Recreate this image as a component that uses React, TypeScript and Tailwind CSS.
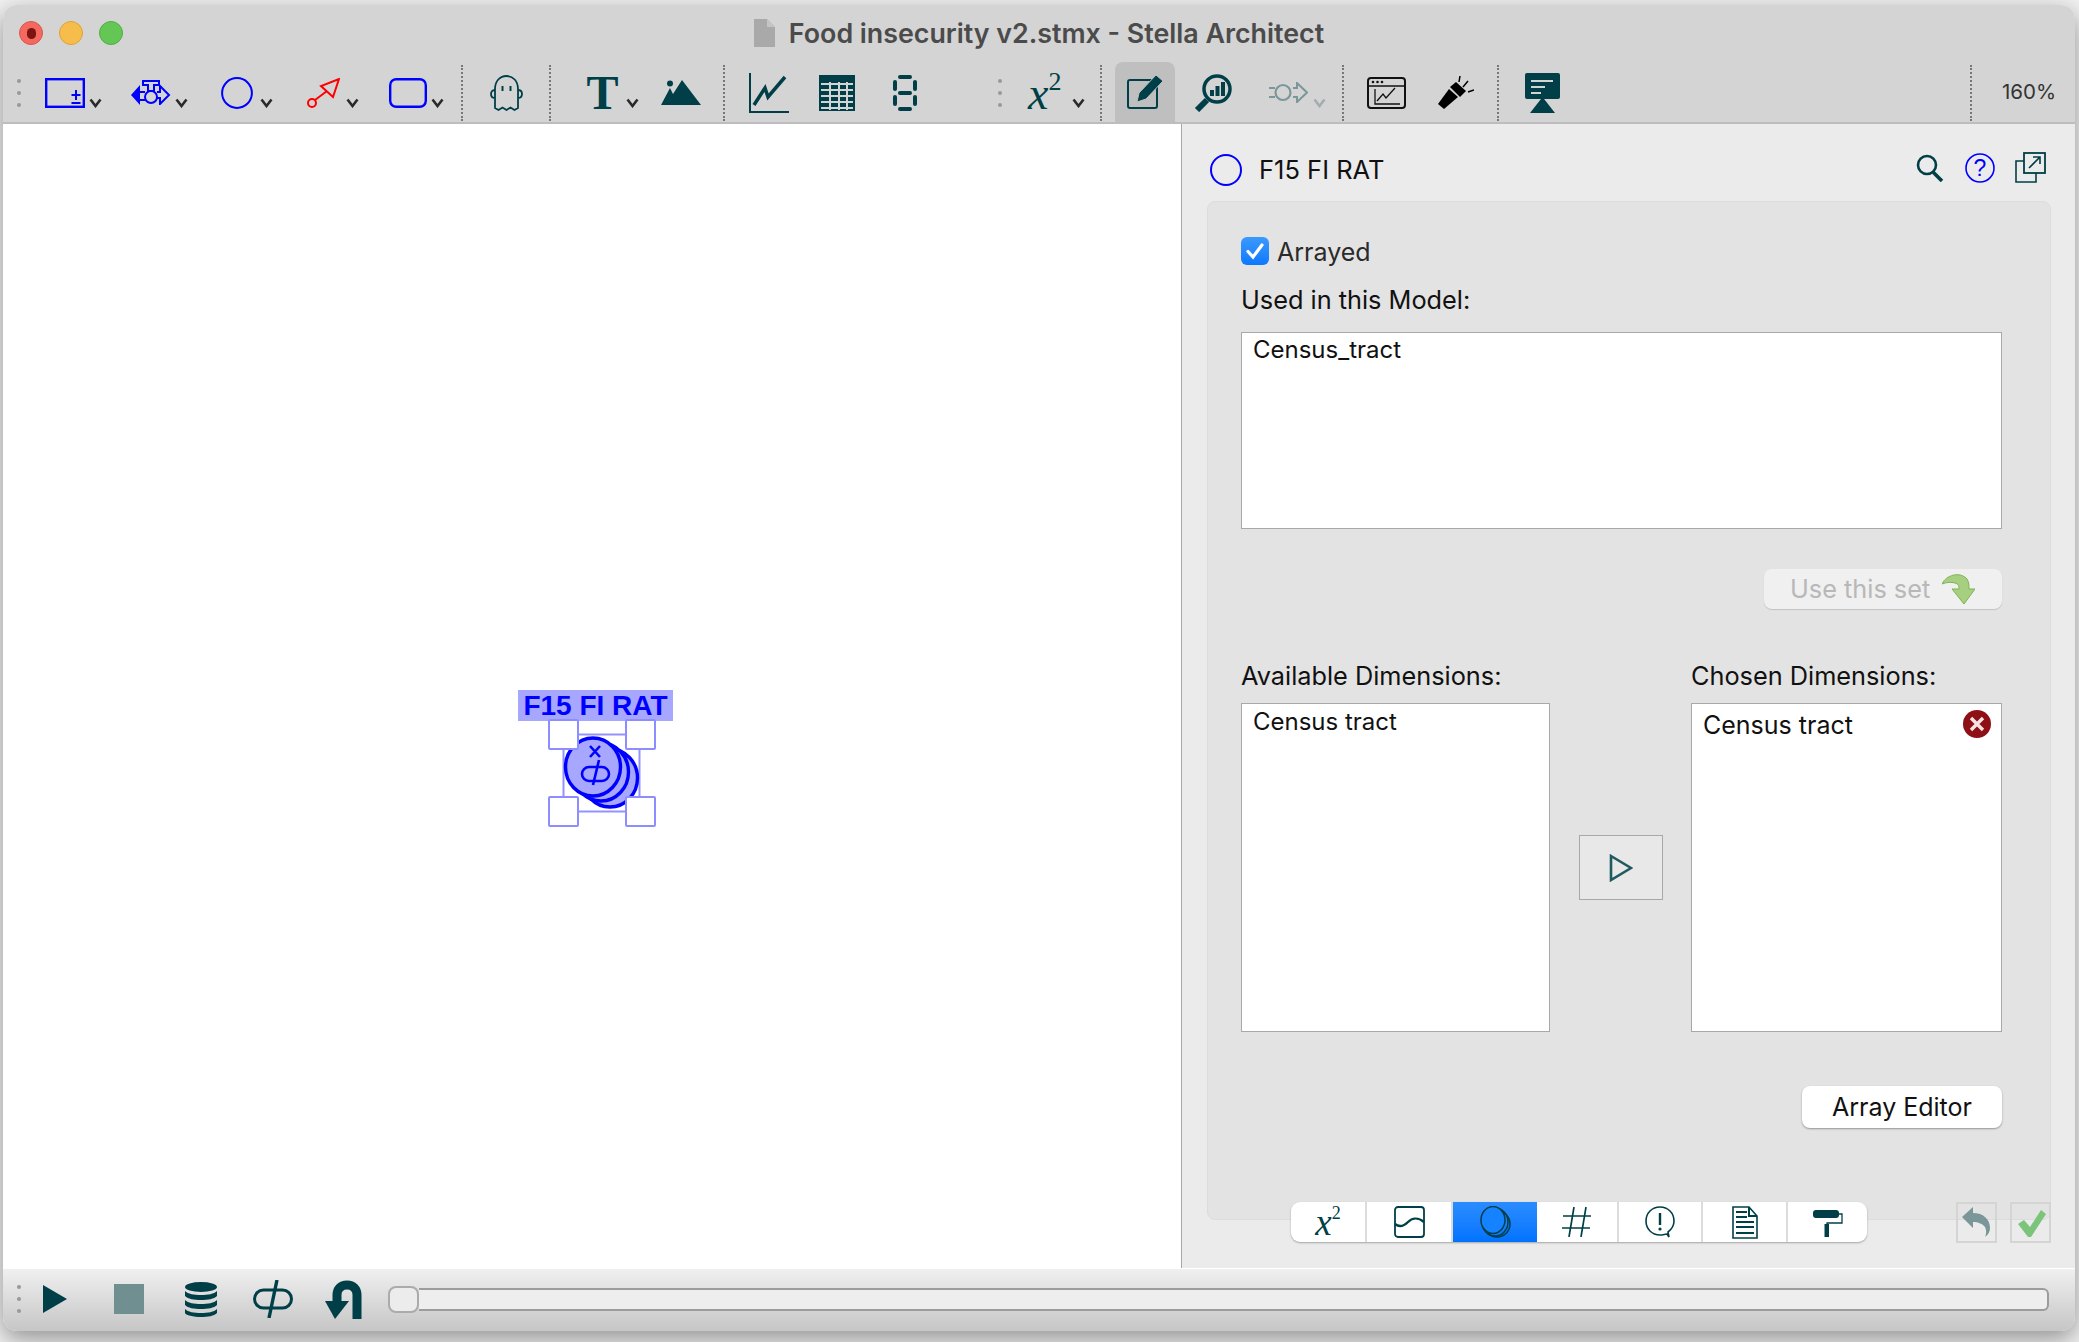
const teal = "#003f47";

function Chevron({ light, ml }: { light?: boolean; ml: string }) {
	return (
		<svg width="13" height="10" viewBox="0 0 13 10" className={`mt-[20px] shrink-0 ${ml}`}>
			<path d="M1.500 1.500 6.500 8l5-6.500" fill="none" stroke={light ? "#a3adae" : "#2a2a2a"} strokeWidth="2.600" />
		</svg>
	);
}

function Sep({ ml }: { ml: string }) {
	return <div className={`h-[56px] w-0 border-l-2 border-dotted border-[#777] shrink-0 ${ml}`} />;
}

function Grip({ className }: { className: string }) {
	return (
		<div className={`flex flex-col gap-[8px] shrink-0 ${className}`}>
			<div className="w-[4px] h-[4px] rounded-full bg-[#999]" />
			<div className="w-[4px] h-[4px] rounded-full bg-[#999]" />
			<div className="w-[4px] h-[4px] rounded-full bg-[#999]" />
		</div>
	);
}

function Toolbar() {
	return (
		<div className="flex items-center h-[61px] pt-[2px]">
			<Grip className="ml-[14px]" />
			{/* stock */}
			<svg width="40" height="30" viewBox="0 0 40 30" className="ml-[24px] shrink-0">
				<rect x="1.200" y="1.200" width="37.600" height="27.600" fill="none" stroke="#0000ff" strokeWidth="2.400" />
				<path d="M31 12v10M26.500 17h9M26.500 25h9" stroke="#0000ff" strokeWidth="2" />
			</svg>
			<Chevron ml="ml-[4px]" />
			{/* flow */}
			<svg width="40" height="25" viewBox="0 0 40 25" className="ml-[29px] shrink-0">
				<path d="M0 15 9 5v20z" fill="#0000ff" />
				<path d="M12 1h16v4h-5v6h-6V5h-5z" fill="none" stroke="#0000ff" strokeWidth="2" />
				<circle cx="20" cy="17" r="6" fill="none" stroke="#0000ff" strokeWidth="2" />
				<path d="M9 12h5M9 20h5M26 12h3V6l9 9-9 9v-6h-3" fill="none" stroke="#0000ff" strokeWidth="2" />
			</svg>
			<Chevron ml="ml-[4px]" />
			{/* converter */}
			<svg width="32" height="32" viewBox="0 0 32 32" className="ml-[33px] shrink-0">
				<circle cx="16" cy="16" r="14.900" fill="none" stroke="#0000ff" strokeWidth="2" />
			</svg>
			<Chevron ml="ml-[7px]" />
			{/* connector */}
			<svg width="33" height="30" viewBox="0 0 33 30" className="ml-[34px] shrink-0">
				<circle cx="5" cy="25" r="4" fill="none" stroke="#ff0000" strokeWidth="2" />
				<path d="M8 22 20 13M32 1 26 19 14 8z" fill="none" stroke="#ff0000" strokeWidth="2" />
			</svg>
			<Chevron ml="ml-[6px]" />
			{/* module */}
			<svg width="38" height="30" viewBox="0 0 38 30" className="ml-[30px] shrink-0">
				<rect x="1.200" y="1.200" width="35.600" height="27.600" rx="6" fill="none" stroke="#0000ff" strokeWidth="2.400" />
			</svg>
			<Chevron ml="ml-[4px]" />
			<Sep ml="ml-[17px]" />
			{/* ghost */}
			<svg width="33" height="36" viewBox="0 0 33 36" className="ml-[27px] shrink-0">
				<path
					d="M5 22V14C5 6 10 1 16.500 1S28 6 28 14v8M5 15c-3 0-4 2-4 4s1 4 4 4v10l3.500 2 4-2.500 4 2.500 4-2.500 4 2.500 3.500-2V23c3 0 4-2 4-4s-1-4-4-4"
					fill="none"
					stroke={teal}
					strokeWidth="1.800"
				/>
				<path d="M12.500 11v5M20.500 11v5" stroke={teal} strokeWidth="2" />
			</svg>
			<Sep ml="ml-[26px]" />
			{/* text */}
			<span className="ml-[35px] w-[33px] h-[48px] shrink-0 flex items-center justify-center font-['Liberation_Serif',serif] font-bold text-[48px] leading-none text-[#003f47]">
				T
			</span>
			<Chevron ml="ml-[7px]" />
			{/* image */}
			<svg width="40" height="25" viewBox="0 0 40 25" className="ml-[22px] shrink-0">
				<circle cx="9" cy="3.500" r="3" fill={teal} />
				<path d="M0 25 9 8l3 6L21 0l19 25z" fill={teal} />
			</svg>
			<Sep ml="ml-[22px]" />
			{/* graph */}
			<svg width="40" height="40" viewBox="0 0 40 40" className="ml-[24px] shrink-0">
				<path d="M1 0v39h39" fill="none" stroke={teal} strokeWidth="2" />
				<path d="M5 32 16 15l3 9L36 4" fill="none" stroke={teal} strokeWidth="3.500" />
			</svg>
			{/* table */}
			<svg width="36" height="36" viewBox="0 0 36 36" className="ml-[30px] shrink-0">
				<rect width="36" height="36" fill={teal} />
				<path d="M2 9h32M2 15h32M2 21h32M2 27h32M2 33h32" stroke="#d4d4d4" strokeWidth="2.200" />
				<path d="M11 7v28M20 7v28M28 7v28" stroke="#d4d4d4" strokeWidth="2" />
			</svg>
			{/* numeric display */}
			<svg width="24" height="36" viewBox="0 0 24 36" className="ml-[38px] shrink-0">
				<g fill={teal}>
					<rect x="5" y="0" width="14" height="4" rx="2" />
					<rect x="5" y="16" width="14" height="4" rx="2" />
					<rect x="5" y="32" width="14" height="4" rx="2" />
					<rect x="0" y="5" width="4" height="11" rx="2" />
					<rect x="20" y="5" width="4" height="11" rx="2" />
					<rect x="0" y="20" width="4" height="11" rx="2" />
					<rect x="20" y="20" width="4" height="11" rx="2" />
				</g>
			</svg>
			<Grip className="ml-[81px]" />
			{/* equation */}
			<span className="ml-[26px] w-[41px] h-[50px] shrink-0 flex font-['Liberation_Serif',serif] italic text-[46px] leading-[52px] text-[#003f47]">
				x<span className="not-italic text-[26px] leading-[28px]">2</span>
			</span>
			<Chevron ml="ml-[3px]" />
			<Sep ml="ml-[15px]" />
			{/* model mode, selected */}
			<div className="ml-[13px] w-[60px] h-[60px] self-end rounded-t-[8px] bg-[#bfbfbf] flex items-center justify-center shrink-0">
				<svg width="37" height="34" viewBox="0 0 37 34">
					<rect x="1" y="5" width="29" height="28" rx="2" fill="none" stroke={teal} strokeWidth="2" />
					<path d="M10 27 12 18 29 0l7 6-17 18z" fill={teal} stroke="#bfbfbf" strokeWidth="1" />
				</svg>
			</div>
			{/* analyze */}
			<svg width="38" height="38" viewBox="0 0 38 38" className="ml-[19px] shrink-0">
				<circle cx="23" cy="15" r="13" fill="none" stroke={teal} strokeWidth="3.500" />
				<path d="M13 26 3 36" stroke={teal} strokeWidth="6" />
				<path d="M16 16h4v6h-4zM21.500 12h4v10h-4zM27 8h4v14h-4z" fill={teal} />
			</svg>
			{/* disabled module link */}
			<svg width="39" height="21" viewBox="0 0 39 21" className="ml-[37px] shrink-0">
				<path d="M0 6h6M0 15h6M24 6h4V1l10 9.500L28 20v-5h-4" fill="none" stroke="#7c979a" strokeWidth="2" />
				<circle cx="14" cy="10.500" r="7.500" fill="none" stroke="#7c979a" strokeWidth="2.200" />
			</svg>
			<Chevron light ml="ml-[5px]" />
			<Sep ml="ml-[16px]" />
			{/* window with graph */}
			<svg width="39" height="32" viewBox="0 0 39 32" className="ml-[23px] shrink-0">
				<rect x="1" y="1" width="37" height="30" rx="3" fill="none" stroke="#111" strokeWidth="2" />
				<path d="M1 9h37" stroke="#111" strokeWidth="1.500" />
				<circle cx="6" cy="5" r="1.300" fill="#111" />
				<circle cx="10.500" cy="5" r="1.300" fill="#111" />
				<circle cx="15" cy="5" r="1.300" fill="#111" />
				<path d="M8 12v15h25M10 24l6-7 3 4 9-10" fill="none" stroke="#111" strokeWidth="1.300" />
			</svg>
			{/* flashlight */}
			<svg width="36" height="33" viewBox="0 0 36 33" className="ml-[32px] shrink-0">
				<path d="M0 28 11 13l9 8L6 33z" fill="#000" />
				<path d="M12 11 18 6l10 9-6 6z" fill="#000" />
				<path d="M22 0l-1 6M30 5l-5 6M36 14l-6 2" stroke="#000" strokeWidth="1.500" />
			</svg>
			<Sep ml="ml-[23px]" />
			{/* presentation */}
			<svg width="35" height="40" viewBox="0 0 35 40" className="ml-[26px] shrink-0">
				<rect width="35" height="26" rx="2" fill={teal} />
				<path d="M6 8h22M6 14h14M6 20h10" stroke="#d4d4d4" strokeWidth="2" />
				<path d="M17.500 24 30 40H5z" fill={teal} />
			</svg>
			<Sep ml="ml-[410px]" />
			<span className="ml-[30px] text-[20.500px] text-[#333] leading-none">160%</span>
		</div>
	);
}

function Canvas() {
	return (
		<div className="relative w-[1178px] bg-white shrink-0">
			<div className="absolute left-[515px] top-[566px] w-[155px] h-[31px] bg-[#a7a7ff] flex items-center justify-center font-['Liberation_Sans',sans-serif] font-bold text-[28px] text-[#0000ff] leading-none">
				F15 FI RAT
			</div>
			<svg width="115" height="115" viewBox="545 715 115 115" className="absolute left-[542px] top-[591px]">
				<rect x="563.500" y="734.500" width="76" height="77" fill="none" stroke="#9393ff" strokeWidth="2" />
				{[
					[610, 778],
					[601, 772],
					[593, 767],
				].map(([cx, cy]) => (
					<ellipse key={cx} cx={cx} cy={cy} rx="27.500" ry="29" fill="#a7a7ff" stroke="#0000ff" strokeWidth="3.400" />
				))}
				<path d="M590 746l10 11M600 746l-10 11M599 760l-6 25" stroke="#0000ff" strokeWidth="2.600" />
				<rect x="582" y="767" width="27" height="14" rx="7" fill="none" stroke="#0000ff" strokeWidth="2.600" />
				{[
					[549, 720],
					[626, 720],
					[549, 797],
					[626, 797],
				].map(([x, y]) => (
					<rect key={`${x}-${y}`} x={x} y={y} width="29" height="29" rx="1" fill="#fff" stroke="#8d8dff" strokeWidth="2" />
				))}
			</svg>
		</div>
	);
}

function ListBox({ className, children }: { className: string; children?: React.ReactNode }) {
	return (
		<div className={`bg-white border border-[#a8a8a8] pl-[11px] text-[24px] leading-[34px] text-[#111] ${className}`}>
			{children}
		</div>
	);
}

function Tab({ active, w, children }: { active?: boolean; w: string; children: React.ReactNode }) {
	return (
		<div className={`flex items-center justify-center h-full shrink-0 ${w} ${active ? "bg-gradient-to-b from-[#2a8cff] to-[#0073ff]" : "border-r-2 border-[#dcdcdc]"}`}>
			{children}
		</div>
	);
}

function Inspector() {
	return (
		<div className="flex-1 min-w-0 bg-[#ebebeb] border-l border-[#a8a8a8] flex flex-col">
			<div className="flex items-center h-[77px] pt-[14px] shrink-0">
				<svg width="32" height="32" viewBox="0 0 32 32" className="ml-[28px] shrink-0">
					<circle cx="16" cy="16" r="15" fill="none" stroke="#0000ff" strokeWidth="2" />
				</svg>
				<span className="ml-[17px] text-[25.500px] leading-none text-[#111]">F15 FI RAT</span>
				<div className="ml-auto flex items-center mr-[29px] -mt-[4px]">
					<svg width="28" height="28" viewBox="0 0 28 28" className="shrink-0">
						<circle cx="11" cy="11" r="9" fill="none" stroke={teal} strokeWidth="2.600" />
						<path d="M17 18l9 9" stroke={teal} strokeWidth="3.600" />
					</svg>
					<svg width="30" height="30" viewBox="0 0 30 30" className="ml-[21px] shrink-0">
						<circle cx="15" cy="15" r="14" fill="none" stroke="#0000ff" strokeWidth="1.600" />
						<text x="15" y="23" textAnchor="middle" fontSize="23" fill="#0000ff" fontFamily="Liberation Sans">?</text>
					</svg>
					<svg width="31" height="31" viewBox="0 0 31 31" className="ml-[20px] shrink-0">
						<path d="M9 9H1v21h20v-9" fill="none" stroke={teal} strokeWidth="1.600" />
						<rect x="9" y="1" width="21" height="20" fill="#ebebeb" stroke={teal} strokeWidth="1.800" />
						<path d="M14 16 25 5M18 5h7v7" fill="none" stroke={teal} strokeWidth="1.600" />
					</svg>
				</div>
			</div>

			<div className="ml-[25px] w-[844px] h-[1019px] shrink-0 bg-[#e3e3e3] border border-[#dcdcdc] rounded-[8px] pl-[33px] pt-[35px] flex flex-col">
				<div className="flex items-center h-[28px] w-[761px]">
					<div className="w-[28px] h-[28px] rounded-[6px] bg-gradient-to-b from-[#3b99fc] to-[#0a78ff] flex items-center justify-center shrink-0">
						<svg width="20" height="18" viewBox="0 0 20 18">
							<path d="M3 9.500 8 15 17 3" fill="none" stroke="#fff" strokeWidth="3.200" strokeLinecap="round" />
						</svg>
					</div>
					<span className="ml-[8px] mt-[2px] text-[25px] leading-none text-[#2a2a2a]">Arrayed</span>
				</div>
				<div className="mt-[19px] h-[32px] text-[25.300px] leading-[32px] text-[#111]">Used in this Model:</div>
				<ListBox className="mt-[16px] w-[761px] h-[197px]">Census_tract</ListBox>
				<div className="mt-[40px] h-[40px] w-[761px] flex justify-end">
					<div className="w-[238px] h-full rounded-[8px] bg-[#f0f0f0] shadow-[0_1px_1px_rgba(0,0,0,0.15)] flex items-center pl-[26px]">
						<span className="text-[25.300px] leading-none text-[#b8b8b8]">Use this set</span>
						<svg width="33" height="32" viewBox="0 0 33 32" className="ml-[12px] shrink-0">
							<path d="M0 11C4 2 18-2 25 6c2 3 2 7 2 10h6L22 31 10 16h7c0-4-1-5-4-6-4-1-8-1-13 1z" fill="#a6d07f" stroke="#7db356" strokeWidth="1" />
						</svg>
					</div>
				</div>
				<div className="mt-[51px] h-[32px] w-[761px] flex text-[25.300px] leading-[32px] text-[#111]">
					<span className="w-[450px]">Available Dimensions:</span>
					<span>Chosen Dimensions:</span>
				</div>
				<div className="mt-[11px] w-[761px] h-[329px] flex items-center justify-between">
					<ListBox className="w-[309px] h-full pt-[1px]">Census tract</ListBox>
					<div className="w-[84px] h-[65px] bg-[#e8e8e8] border border-[#a8a8a8] flex items-center justify-center">
						<svg width="24" height="28" viewBox="0 0 24 28">
							<path d="M2 2 22 14 2 26z" fill="none" stroke="#1f5a60" strokeWidth="2.600" />
						</svg>
					</div>
					<ListBox className="w-[311px] h-full flex justify-between pr-[10px] pt-[4px]">
						<span className="text-[25px]">Census tract</span>
						<svg width="28" height="28" viewBox="0 0 28 28" className="mt-[2px] shrink-0">
							<circle cx="14" cy="14" r="14" fill="#8f0f16" />
							<path d="M8 8l12 12M20 8 8 20" stroke="#f4e3e3" strokeWidth="3.400" />
						</svg>
					</ListBox>
				</div>
				<div className="mt-[54px] w-[761px] flex justify-end">
					<div className="w-[200px] h-[42px] rounded-[8px] bg-white shadow-[0_1px_2px_rgba(0,0,0,0.35)] flex items-center justify-center text-[25px] leading-none text-[#111]">
						Array Editor
					</div>
				</div>
			</div>

			<div className="-mt-[18px] flex items-start ml-[109px] h-[41px] shrink-0">
				<div className="w-[576px] h-[40px] rounded-[9px] bg-white overflow-hidden flex shadow-[0_1px_2px_rgba(0,0,0,0.3)] shrink-0">
					<Tab w="w-[76px]">
						<span className="flex items-start h-[36px] font-['Liberation_Serif',serif] italic text-[37px] leading-[38px] text-[#003f47]">
							x<span className="not-italic text-[18px] leading-[18px]">2</span>
						</span>
					</Tab>
					<Tab w="w-[86px]">
						<svg width="31" height="32" viewBox="0 0 31 32">
							<rect x="1" y="1" width="29" height="30" rx="3" fill="none" stroke={teal} strokeWidth="1.800" />
							<path d="M1 18c5 4 9 2 13-2s10-5 16 0" fill="none" stroke={teal} strokeWidth="2.400" />
						</svg>
					</Tab>
					<Tab active w="w-[84px]">
						<svg width="31" height="32" viewBox="0 0 31 32">
							<g fill="none" stroke={teal} strokeWidth="1.500">
								<ellipse cx="17" cy="18" rx="13" ry="13" />
								<ellipse cx="15" cy="16" rx="13" ry="14" />
								<ellipse cx="13" cy="14" rx="12" ry="13.500" fill="#1582ff" />
							</g>
						</svg>
					</Tab>
					<Tab w="w-[82px]">
						<svg width="30" height="30" viewBox="0 0 30 30">
							<path d="M12 0 7 30M24 0 19 30M1 9h28M0 21h28" stroke={teal} strokeWidth="1.700" fill="none" />
						</svg>
					</Tab>
					<Tab w="w-[84px]">
						<svg width="30" height="32" viewBox="0 0 30 32">
							<path d="M23 26c4-3 6-6 6-11C29 7 23 1 15 1S1 7 1 15s6 14 14 14c3 0 5-1 7-1l2 3z" fill="none" stroke={teal} strokeWidth="1.600" />
							<path d="M15 7v12" stroke={teal} strokeWidth="2.400" />
							<circle cx="15" cy="23" r="1.600" fill={teal} />
						</svg>
					</Tab>
					<Tab w="w-[85px]">
						<svg width="26" height="33" viewBox="0 0 26 33">
							<path d="M1 1h16l8 9v22H1z" fill="none" stroke={teal} strokeWidth="1.600" />
							<path d="M17 1v9h8M4 6h11M4 11h11M4 16h18M4 21h18M4 27h18" fill="none" stroke={teal} strokeWidth="2" />
						</svg>
					</Tab>
					<div className="flex-1 flex items-center justify-center">
						<svg width="30" height="30" viewBox="0 0 30 30">
							<rect x="0" y="3" width="26" height="8" rx="3" fill={teal} />
							<path d="M26 7h3v9H14v5" fill="none" stroke={teal} strokeWidth="1.300" />
							<rect x="11.500" y="17" width="4.500" height="13" fill={teal} />
						</svg>
					</div>
				</div>
				<div className="ml-[89px] w-[41px] h-[41px] border-2 border-[#d4d4d4] flex items-center justify-center shrink-0">
					<svg width="30" height="31" viewBox="0 0 30 31">
						<path d="M0 10 11 0v6c10 0 17 6 17 15 0 4-2 7-5 9 1-2 2-6 0-10-2-3-7-5-12-5v6z" fill="#7a9699" />
					</svg>
				</div>
				<div className="ml-[13px] w-[41px] h-[41px] border-2 border-[#d4d4d4] flex items-center justify-center shrink-0">
					<svg width="30" height="28" viewBox="0 0 30 28">
						<path d="M2 15l6-4 6 7L25 1l5 4-15 23h-3z" fill="#7cc47c" />
					</svg>
				</div>
			</div>
		</div>
	);
}

function StatusBar() {
	return (
		<div className="h-[63px] shrink-0 border-t border-white bg-gradient-to-b from-[#f0f0f0] to-[#c6c6c6] flex items-center pb-[2px]">
			<Grip className="ml-[14px]" />
			<svg width="24" height="28" viewBox="0 0 24 28" className="ml-[22px] shrink-0">
				<path d="M0 0 24 14 0 28z" fill={teal} />
			</svg>
			<div className="ml-[47px] w-[30px] h-[30px] bg-[#6f8f91] shrink-0" />
			<svg width="32" height="35" viewBox="0 0 32 35" className="ml-[41px] shrink-0">
				<g fill={teal}>
					<ellipse cx="16" cy="5" rx="16" ry="5" />
					<path d="M0 9c3 3 9 4 16 4s13-1 16-4v5c-3 3-9 4-16 4S3 17 0 14z" />
					<path d="M0 18c3 3 9 4 16 4s13-1 16-4v5c-3 3-9 4-16 4S3 26 0 23z" />
					<path d="M0 27c3 3 9 4 16 4s13-1 16-4v4c-3 3-9 4-16 4S0 33 0 31z" />
				</g>
			</svg>
			<svg width="40" height="38" viewBox="0 0 40 38" className="ml-[36px] shrink-0">
				<rect x="1.500" y="10" width="37" height="18" rx="9" fill="none" stroke={teal} strokeWidth="3" />
				<path d="M24 0 16 38" stroke={teal} strokeWidth="3.400" />
			</svg>
			<svg width="37" height="39" viewBox="0 0 37 39" className="ml-[32px] shrink-0">
				<path d="M32 39V15c0-6-4-10-10-10s-10 4-10 10v8" fill="none" stroke={teal} strokeWidth="9" />
				<path d="M0 21h24L10 39z" fill={teal} />
			</svg>
			<div className="ml-[26px] flex items-center flex-1 mr-[26px] min-w-0">
				<div className="w-[31px] h-[27px] rounded-[8px] bg-[#ececec] border-2 border-[#ababab] shrink-0" />
				<div className="flex-1 h-[23px] rounded-r-[6px] bg-[#eeeeee] border-y-2 border-r-2 border-[#9c9c9c]" />
			</div>
		</div>
	);
}

export default function App() {
	return (
		<div className="w-[2079px] h-[1342px] bg-[#f1f1f1] overflow-hidden pl-[3px] pt-[5px] font-['Inter',sans-serif]">
			<div className="w-[2072px] h-[1326px] rounded-[14px] overflow-hidden flex flex-col bg-white shadow-[0_8px_24px_rgba(0,0,0,0.4)]">
				<div className="h-[119px] shrink-0 bg-[#d4d4d4] border-b-2 border-[#bdbdbd] flex flex-col">
					<div className="h-[56px] shrink-0 flex items-center relative">
						<div className="absolute left-[16px] top-[16px] w-[24px] h-[24px] rounded-full bg-[#f4695f] border border-[#d9564c] flex items-center justify-center">
							<div className="w-[9px] h-[11px] rounded-full bg-[#7c1410]" />
						</div>
						<div className="absolute left-[56px] top-[16px] w-[24px] h-[24px] rounded-full bg-[#f7bd4b] border border-[#dba23a]" />
						<div className="absolute left-[96px] top-[16px] w-[24px] h-[24px] rounded-full bg-[#63c655] border border-[#4faf43]" />
						<div className="flex-1 flex items-center justify-center">
							<svg width="21" height="28" viewBox="0 0 21 28" className="shrink-0">
								<path d="M0 0h13l8 8v20H0z" fill="#a9a9a9" />
								<path d="M13 0v8h8z" fill="#c4c4c4" />
							</svg>
							<span className="ml-[14px] text-[26.800px] leading-none font-semibold text-[#4b4b4b]">
								Food insecurity v2.stmx - Stella Architect
							</span>
						</div>
					</div>
					<Toolbar />
				</div>
				<div className="flex-1 min-h-0 flex">
					<Canvas />
					<Inspector />
				</div>
				<StatusBar />
			</div>
		</div>
	);
}
